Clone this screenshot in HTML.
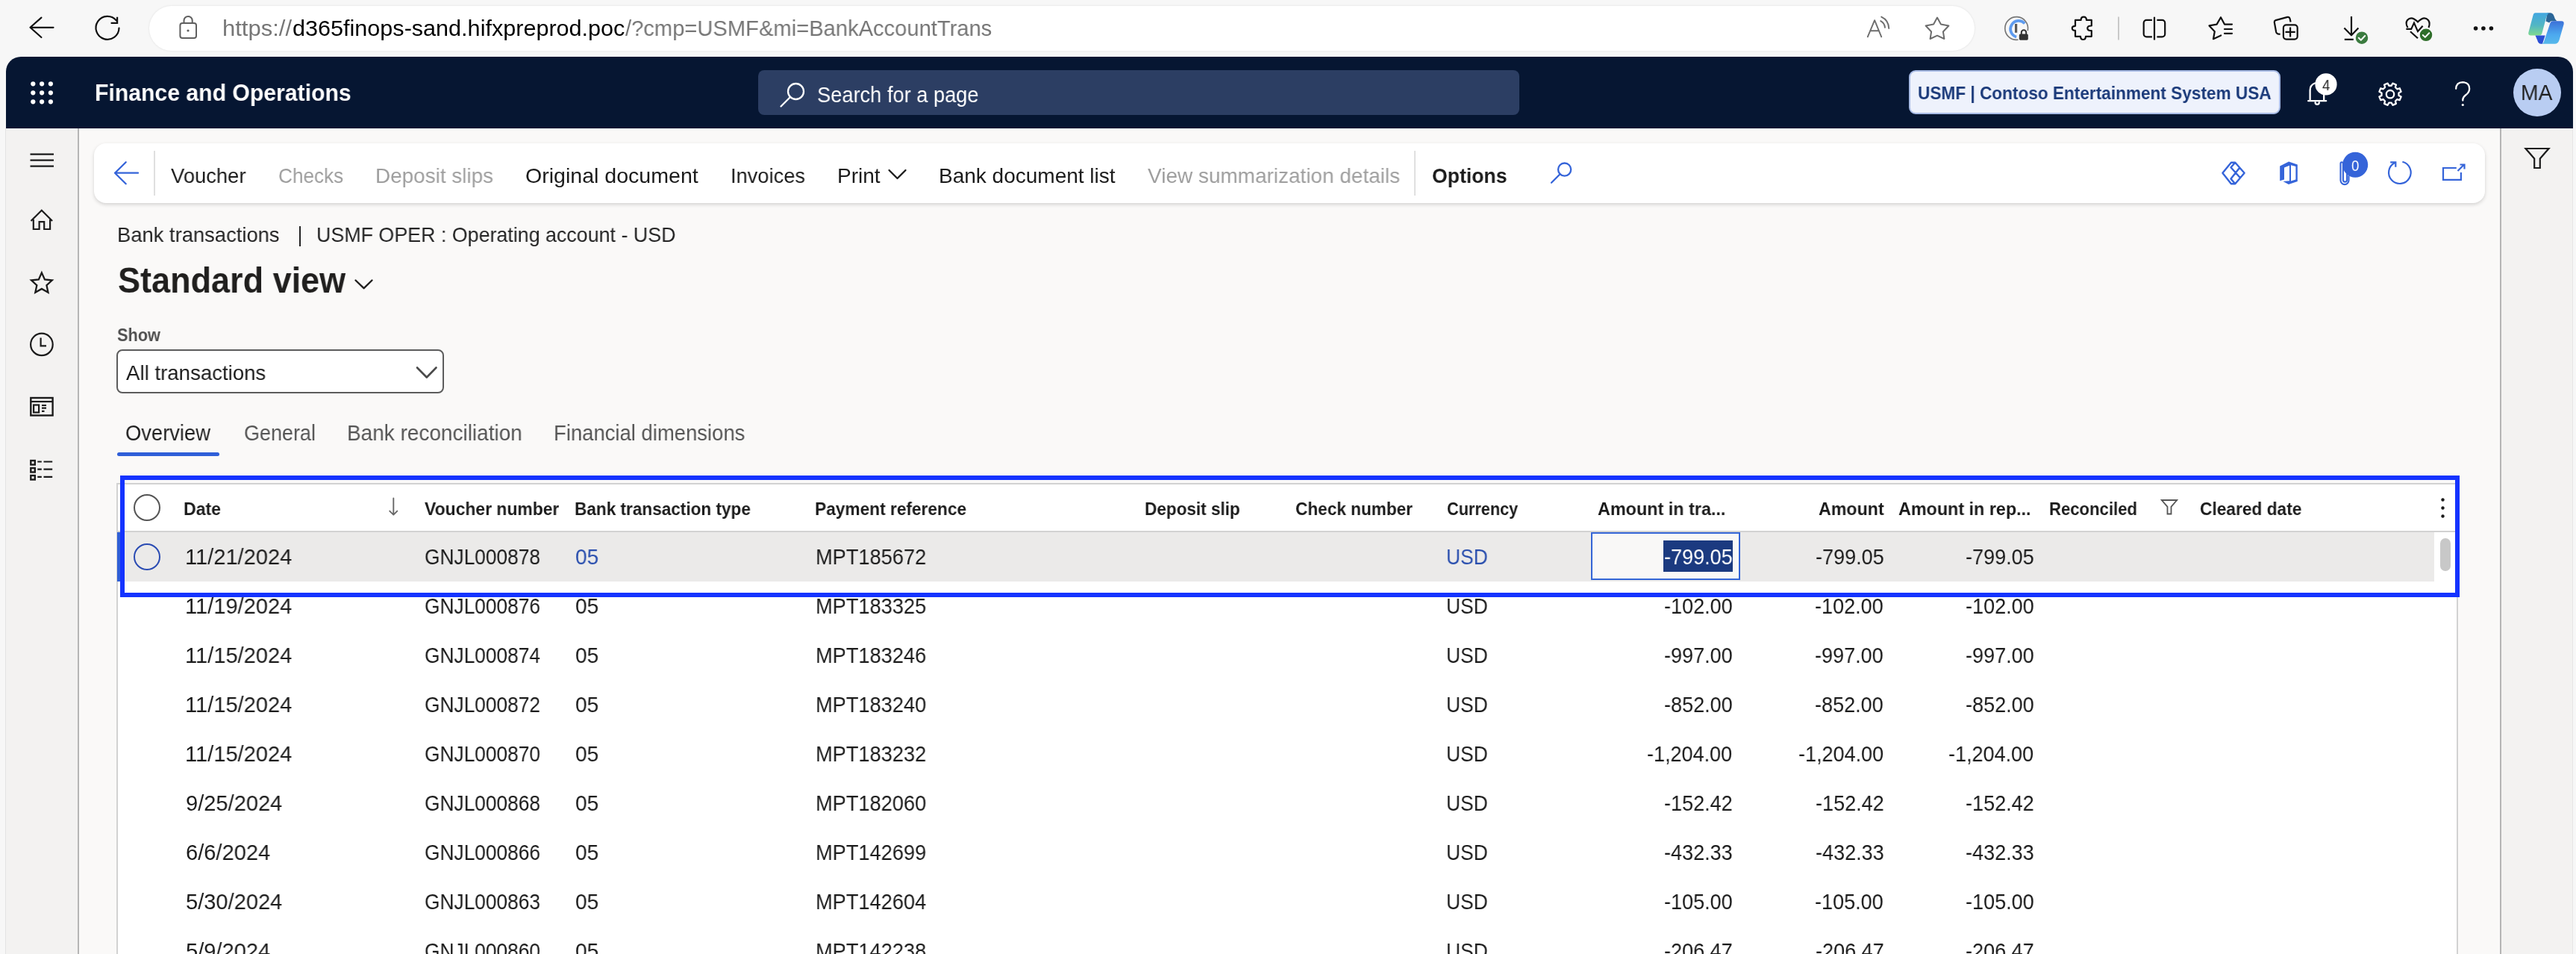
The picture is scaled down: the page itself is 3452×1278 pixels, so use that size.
<!DOCTYPE html>
<html><head><meta charset="utf-8"><title>Bank transactions</title>
<style>
html,body{margin:0;padding:0;}
body{width:3452px;height:1278px;overflow:hidden;position:relative;background:#f7f7f7;font-family:"Liberation Sans", sans-serif;}
.abs{position:absolute;}
.t{position:absolute;white-space:nowrap;transform-origin:0 0;will-change:transform;}
svg.i{position:absolute;overflow:visible;}
</style></head><body>
<div class="abs" style="left:0;top:0;width:3452px;height:76px;background:#f7f7f7"></div>
<div class="abs" style="left:200px;top:8px;width:2446px;height:60px;border-radius:30px;background:#fff;box-shadow:0 0 3px rgba(0,0,0,.10)"></div>
<div class="abs" style="left:8px;top:76px;width:3440px;height:96px;background:#061632;border-radius:20px 20px 0 0"></div>
<div class="abs" style="left:7px;top:172px;width:98px;height:1106px;background:#f3f2f1;border-left:1px solid #e3e3e3;box-sizing:border-box"></div>
<div class="abs" style="left:104px;top:172px;width:2px;height:1106px;background:#b5b5b5"></div>
<div class="abs" style="left:106px;top:172px;width:3244px;height:1106px;background:#faf9f8"></div>
<div class="abs" style="left:3350px;top:172px;width:2px;height:1106px;background:#b5b5b5"></div>
<div class="abs" style="left:3352px;top:172px;width:96px;height:1106px;background:#f3f2f1;border-right:1px solid #e6e6e6;box-sizing:border-box"></div>
<!-- navbar items -->
<div class="abs" style="left:1016px;top:94px;width:1020px;height:60px;background:#2c3e63;border-radius:8px"></div>
<div class="abs" style="left:2558px;top:94px;width:498px;height:59px;background:#eef2fc;border:2px solid #a9bce6;border-radius:9px;box-sizing:border-box"></div>
<div class="abs" style="left:3368px;top:92px;width:64px;height:64px;background:#b9cdf2;border-radius:50%"></div>
<!-- command bar -->
<div class="abs" style="left:126px;top:192px;width:3204px;height:80px;background:#fff;border-radius:16px;box-shadow:0 2px 5px rgba(0,0,0,.16)"></div>
<div class="abs" style="left:206px;top:202px;width:2px;height:60px;background:#e0e0e0"></div>
<div class="abs" style="left:1895px;top:202px;width:2px;height:60px;background:#e0e0e0"></div>
<!-- breadcrumb separator -->
<div class="abs" style="left:401px;top:303px;width:2px;height:27px;background:#242424"></div>
<!-- dropdown -->
<div class="abs" style="left:156px;top:468px;width:439px;height:59px;background:#fff;border:2px solid #5c5c5c;border-radius:8px;box-sizing:border-box"></div>
<!-- tab underline -->
<div class="abs" style="left:157px;top:606px;width:137px;height:5px;background:#2f5fd8;border-radius:3px"></div>
<!-- grid -->
<div class="abs" style="left:156px;top:647px;width:3138px;height:700px;background:#fff;border:2px solid #d2d2d2;box-sizing:border-box"></div>
<div class="abs" style="left:158px;top:711px;width:3134px;height:2px;background:#d2d2d2"></div>
<div class="abs" style="left:158px;top:713px;width:3104px;height:66px;background:#ebeae9"></div>
<div class="abs" style="left:157px;top:713px;width:4px;height:66px;background:#2f5fd8"></div>
<div class="abs" style="left:2132px;top:713px;width:200px;height:64px;background:#f9f8f7;border:2px solid #3465d6;box-sizing:border-box"></div>
<div class="abs" style="left:2229px;top:724px;width:93px;height:42px;background:#1b3a80"></div>
<div class="abs" style="left:3270px;top:721px;width:14px;height:44px;background:#c8c8c8;border-radius:7px"></div>
<div class="abs" style="left:179px;top:662px;width:36px;height:36px;border:2px solid #555;border-radius:50%;box-sizing:border-box"></div>
<div class="abs" style="left:179px;top:728px;width:36px;height:36px;border:2px solid #2a4bb3;border-radius:50%;box-sizing:border-box"></div>
<!-- annotation rect -->
<div class="abs" style="left:161px;top:637px;width:3135px;height:163px;border:6px solid #1433ff;box-sizing:border-box"></div>

<svg class="i" style="left:0;top:0" width="3452" height="1278" viewBox="0 0 3452 1278">
<g fill="none" stroke-linecap="round" stroke-linejoin="round">
  <!-- browser back -->
  <path d="M71.5 36.8H40.5M55.4 23.6L40.5 36.8L55.4 50" stroke="#111" stroke-width="2.2"/>
  <!-- refresh -->
  <path d="M159.5 37.5A15.5 15.5 0 1 1 156 27.5" stroke="#111" stroke-width="2.2"/>
  <path d="M157.1 22.8V30.9H148.6" stroke="#111" stroke-width="2.2" stroke-linecap="butt" stroke-linejoin="miter"/>
  <!-- lock -->
  <path d="M246.5 30.5V27.5A5.6 5.6 0 0 1 257.7 27.5V30.5" stroke="#5f5f5f" stroke-width="2"/>
  <rect x="241.4" y="31" width="21.6" height="20" rx="3" stroke="#5f5f5f" stroke-width="2"/>
  <circle cx="252" cy="41" r="1.6" fill="#5f5f5f" stroke="none"/>
  <!-- read aloud -->
  <path d="M2502.8 49.3L2512.1 27.2L2521.2 49.3M2506.9 41.2H2517.3" stroke="#6d6d6d" stroke-width="1.9"/>
  <path d="M2520.2 28.1Q2525.5 31 2526 36.8" stroke="#6d6d6d" stroke-width="1.9"/>
  <path d="M2521.2 22.6Q2530.8 27 2531.2 38" stroke="#6d6d6d" stroke-width="1.9"/>
  <!-- fav star -->
  <path d="M2596 23.6L2600.9 32.4L2611.4 34.5L2603.9 42.5L2605.4 52L2596 47.7L2586.6 52L2588.1 42.5L2580.6 34.5L2591.1 32.4Z" stroke="#6d6d6d" stroke-width="2"/>
  <!-- 1password -->
  <path d="M2704 53.3A15.4 15.4 0 1 1 2717.4 40.5" stroke="#777" stroke-width="1.6"/>
  <path d="M2713.3 31.5A11 11 0 1 0 2702.2 49.5" stroke="#5e9bef" stroke-width="3.8" stroke-linecap="butt"/>
  <rect x="2700" y="32" width="3.2" height="11.8" fill="#5a5a5a" stroke="none"/>
  <path d="M2708.8 46V43.5A3.2 3.2 0 0 1 2715.2 43.5V46" stroke="#333" stroke-width="2"/>
  <rect x="2705.8" y="45.5" width="12" height="8.2" rx="1.6" fill="#333" stroke="none"/>
  <!-- puzzle -->
  <path d="M2781 26.9H2788.6Q2788.6 22.7 2792.3 22.7Q2796 22.7 2796 26.9H2802.8V34.5Q2797.3 34.5 2797.3 37.8Q2797.3 41.2 2802.8 41.2V48.8H2795Q2795 53 2791.5 53Q2788 53 2788 48.8H2781V40.9Q2776.8 40.9 2776.8 37.8Q2776.8 34.8 2781 34.8Z" stroke="#111" stroke-width="2.2"/>
  <line x1="2839" y1="22.5" x2="2839" y2="53.5" stroke="#c9c9c9" stroke-width="2" stroke-linecap="butt"/>
  <!-- split -->
  <path d="M2883.9 26.9H2876.5A3.8 3.8 0 0 0 2872.7 30.7V45.5A3.8 3.8 0 0 0 2876.5 49.3H2883.9" stroke="#111" stroke-width="2.2" stroke-linecap="butt"/>
  <path d="M2890.4 26.9H2897.4A3.8 3.8 0 0 1 2901.2 30.7V45.5A3.8 3.8 0 0 1 2897.4 49.3H2890.4" stroke="#111" stroke-width="2.2" stroke-linecap="butt"/>
  <line x1="2887" y1="22.7" x2="2887" y2="53.5" stroke="#111" stroke-width="2.2" stroke-linecap="butt"/>
  <!-- favorites -->
  <path d="M2976.2 47.4L2966 52.2L2967.8 42.2L2960.5 34.4L2970.6 32.6L2976 23.2L2981 32.6H2991" stroke="#111" stroke-width="2.2"/>
  <path d="M2981 39H2991M2981 44.8H2991" stroke="#111" stroke-width="2.2"/>
  <!-- collections -->
  <path d="M3055.6 45.8L3052.4 45.4Q3050.6 44.8 3050.2 43L3047.8 29.8Q3047.6 27.7 3049.6 27.1L3065.3 22.9Q3067.8 22.4 3068.6 25L3069.6 29.6" stroke="#111" stroke-width="2.2" stroke-linecap="butt"/>
  <rect x="3059.9" y="33.4" width="18.8" height="19.2" rx="3.8" stroke="#111" stroke-width="2.2"/>
  <path d="M3062.5 42.8H3075.7M3069.1 36.6V49.6" stroke="#111" stroke-width="2.2" stroke-linecap="butt"/>
  <!-- downloads -->
  <path d="M3151 22V47.3M3141.4 37.6L3151 47.3L3160.4 37.6M3141.8 52.9H3153.8" stroke="#111" stroke-width="2.2" stroke-linecap="butt"/>
  <circle cx="3165" cy="50.7" r="9" fill="#3b7b3f" stroke="#f7f7f7" stroke-width="1.5"/>
  <path d="M3160.8 50.8L3163.8 53.7L3169.2 48" stroke="#fff" stroke-width="2"/>
  <!-- health -->
  <path d="M3226.5 37Q3223 31 3226 27Q3230 22.5 3235 25.5Q3239 28 3240 29.5Q3241 28 3245 25.5Q3250 22.5 3254 27Q3257 31 3254.5 37" stroke="#111" stroke-width="2.2" stroke-linecap="butt"/>
  <path d="M3224.4 38.9H3231.2L3235 30.6L3240 42.1L3246.6 34.7" stroke="#111" stroke-width="2.2" stroke-linecap="butt" stroke-linejoin="miter"/>
  <path d="M3230 42.2L3240 51.3" stroke="#111" stroke-width="2.2" stroke-linecap="butt"/>
  <circle cx="3251" cy="46.8" r="9" fill="#2f6e2a" stroke="#f7f7f7" stroke-width="1.5"/>
  <path d="M3246.8 47L3249.8 49.9L3255.2 44.2" stroke="#fff" stroke-width="2"/>
  <!-- more -->
  <circle cx="3317.6" cy="38" r="2.8" fill="#111" stroke="none"/>
  <circle cx="3327.9" cy="38" r="2.8" fill="#111" stroke="none"/>
  <circle cx="3338.4" cy="38" r="2.8" fill="#111" stroke="none"/>
</g>
<!-- copilot -->
<defs>
  <linearGradient id="cpL" x1="0" y1="0" x2="0" y2="1"><stop offset="0" stop-color="#3fa9e0"/><stop offset="0.5" stop-color="#4cb3c8"/><stop offset="1" stop-color="#7fd98e"/></linearGradient>
  <linearGradient id="cpR" x1="0" y1="0" x2="0" y2="1"><stop offset="0" stop-color="#3e78dc"/><stop offset="0.6" stop-color="#4aa8ee"/><stop offset="1" stop-color="#58b8ec"/></linearGradient>
</defs>
<defs>
  <linearGradient id="cpL2" x1="0" y1="0" x2="0" y2="1"><stop offset="0" stop-color="#42a6e0"/><stop offset="0.55" stop-color="#52b6c4"/><stop offset="1" stop-color="#80da8e"/></linearGradient>
  <linearGradient id="cpR2" x1="0" y1="0" x2="0" y2="1"><stop offset="0" stop-color="#3c70d8"/><stop offset="0.6" stop-color="#4ca9ef"/><stop offset="1" stop-color="#57b9ea"/></linearGradient>
</defs>
<path d="M3413.5 17.3H3417.5Q3420.8 17.3 3422.2 20.8L3424 25.5Q3425.2 28.2 3428.2 28.2H3419.5Q3417.2 28.2 3416.3 30.5L3411.6 28.6Z" fill="#2a6597"/>
<path d="M3397.5 17.3H3416Q3413.3 18.8 3412.2 23L3406.3 45Q3405.6 47.6 3402.6 47.6H3391.6Q3387.7 47.6 3388.3 43.8L3394.5 20.6Q3395.4 17.3 3397.5 17.3Z" fill="url(#cpL2)"/>
<path d="M3397.5 47.6H3410.7L3407 58.8H3405Q3401.5 58.8 3400.3 54Z" fill="#2b4fd4"/>
<path d="M3421.5 28.2H3432.5Q3436.5 28.2 3435.6 32.6L3429.6 53.5Q3428 58.8 3423.5 58.8H3405.8Q3408.2 58.8 3409.3 55L3417.2 31.5Q3418.3 28.2 3421.5 28.2Z" fill="url(#cpR2)"/>
<!-- navbar -->
<g fill="#fff">
  <circle cx="44.3" cy="112.3" r="3.1"/><circle cx="56.1" cy="112.3" r="3.1"/><circle cx="67.9" cy="112.3" r="3.1"/>
  <circle cx="44.3" cy="124.3" r="3.1"/><circle cx="56.1" cy="124.3" r="3.1"/><circle cx="67.9" cy="124.3" r="3.1"/>
  <circle cx="44.3" cy="136.3" r="3.1"/><circle cx="56.1" cy="136.3" r="3.1"/><circle cx="67.9" cy="136.3" r="3.1"/>
</g>
<g fill="none" stroke="#fff" stroke-width="2.3" stroke-linecap="round" stroke-linejoin="round">
  <circle cx="1066.5" cy="122.5" r="10.5"/>
  <path d="M1059 130L1046.5 142.5"/>
  <!-- bell -->
  <path d="M3095.6 134.5V121Q3095.6 114 3102 111.5M3114.2 124V134.5M3093.2 135.2H3117.2"/>
  <path d="M3102.6 137.2A2.6 2.6 0 0 0 3107.8 137.2"/>
  <!-- gear -->
  <circle cx="3203" cy="126.2" r="5.2"/>
  <path d="M3204.71 114.73L3206.37 111.58L3210.95 113.48L3209.90 116.88L3212.32 119.30L3215.72 118.25L3217.62 122.83L3214.47 124.49L3214.47 127.91L3217.62 129.57L3215.72 134.15L3212.32 133.10L3209.90 135.52L3210.95 138.92L3206.37 140.82L3204.71 137.67L3201.29 137.67L3199.63 140.82L3195.05 138.92L3196.10 135.52L3193.68 133.10L3190.28 134.15L3188.38 129.57L3191.53 127.91L3191.53 124.49L3188.38 122.83L3190.28 118.25L3193.68 119.30L3196.10 116.88L3195.05 113.48L3199.63 111.58L3201.29 114.73Z"/>
  <!-- help -->
  <path d="M3291.2 118.8Q3291.5 110.5 3300.2 110.2Q3309.2 110.4 3309.2 119Q3309 124 3304 127.5Q3300.3 130.5 3300.3 133.5V134.5"/>
</g>
<circle cx="3300.3" cy="140.5" r="1.6" fill="#fff"/>
<circle cx="3117" cy="112.9" r="14.6" fill="#fff"/>
<!-- command bar icons -->
<g fill="none" stroke="#3564d9" stroke-width="2.3" stroke-linecap="round" stroke-linejoin="round">
  <path d="M185 231.7H154M168.7 217.3L154 231.7L168.7 246.3"/>
  <circle cx="2096.6" cy="227.1" r="8.6"/>
  <path d="M2090.5 233.2L2079 244.8"/>
  <!-- power apps -->
  <path d="M2995.3 217.8L3007.6 231.8L2995.3 246.2H2989.9L2978.4 231.8L2989.9 217.8Z M2995.3 217.8L2989.5 224.3L3001.6 237.8 M3001 225L2989.5 239.6L2995.3 246.2" stroke-width="2.4" stroke-linejoin="round"/>
  <!-- refresh -->
  <path d="M3219.4 216.8A14.8 14.8 0 1 1 3209.3 217.9" stroke-width="2.2" stroke-linecap="butt"/>
  <path d="M3203.2 217.3H3210.3V223.8" stroke-width="2.2" stroke-linecap="butt" stroke-linejoin="miter"/>
  <!-- open new -->
  <path d="M3291.8 225H3274V240.9H3297.9V231" stroke-width="2.2" stroke-linecap="butt" stroke-linejoin="miter"/>
  <path d="M3293.5 229L3302 220.5M3296.5 220.5H3302.5V226.5" stroke-width="2.2" stroke-linecap="butt" stroke-linejoin="miter"/>
  <!-- paperclip -->
  <path d="M3147.5 236V241.6A5.5 5.5 0 0 1 3136.5 241.6V219A1.7 1.7 0 0 1 3139.9 219V241A2.6 2.6 0 0 0 3145.1 241V231.5" stroke-width="2.1"/>
</g>
<!-- office -->
<path fill="#3564d9" d="M3055.2 222.5L3067.1 216.6L3078.8 220.4V243.1L3066.9 246.9L3059.5 242.9L3068 242.3V221.7L3061 224.5V240.5L3055.2 242.3Z M3070 221.2V242.6L3076.4 240.6V222.9Z" fill-rule="evenodd"/>
<circle cx="3156.2" cy="220.8" r="17" fill="#3564d9"/>
<!-- print chevron & standard view chevron & dropdown chevron -->
<g fill="none" stroke-linecap="round" stroke-linejoin="round">
  <path d="M1191.5 228L1202.5 239L1213.5 228" stroke="#1b1b1b" stroke-width="2.3"/>
  <path d="M476.5 375.5L487.6 386.2L498.5 375.5" stroke="#201f1e" stroke-width="2.4"/>
  <path d="M559 492.5L571.8 505.5L584.5 492.5" stroke="#4a4a4a" stroke-width="2.6"/>
</g>
<!-- right panel filter -->
<path d="M3384.5 199H3415.5L3403.8 212.5V225H3396.2V212.5Z" fill="none" stroke="#1b1b1b" stroke-width="2.2" stroke-linejoin="miter"/>
<!-- sidebar -->
<g fill="none" stroke="#1b1b1b" stroke-width="2.2" stroke-linecap="butt" stroke-linejoin="miter">
  <path d="M40.5 206.7H72M40.5 214.7H72M40.5 222.7H72"/>
  <path d="M41.5 296L55.8 281.8L70.1 296M44.8 294V307H52.6V297.2H59.2V307H67.1V294"/>
  <path d="M55.90 365.40L59.96 374.42L69.79 375.49L62.46 382.13L64.48 391.81L55.90 386.90L47.32 391.81L49.34 382.13L42.01 375.49L51.84 374.42Z" stroke-width="2.3"/>
  <circle cx="55.9" cy="461.4" r="14.8"/>
  <path d="M54.6 452.4V463.3H62"/>
  <rect x="41.3" y="533" width="29.3" height="23.5" stroke-width="2.4"/>
  <path d="M41.3 538H70.6"/>
  <rect x="45.1" y="542.5" width="7" height="10" stroke-width="2.2"/>
  <path d="M56 543H62M56 546.7H62M56 550.8H59.5"/>
  <rect x="41.3" y="617" width="5.5" height="5.5" stroke-width="2.4"/>
  <rect x="41.3" y="627" width="5.5" height="5.5" stroke-width="2.4"/>
  <rect x="41.3" y="637" width="5.5" height="5.5" stroke-width="2.4"/>
  <path d="M50.3 618.5H55.8M58.5 618.5H70.2M50.3 628.7H55.8M58.5 628.7H70.2M50.3 638.8H55.8M58.5 638.8H70.2"/>
</g>
<!-- grid icons -->
<g fill="none" stroke-linecap="butt">
  <path d="M527.3 667.5V689.5M522.2 684.6L527.3 689.7L532.3 684.6" stroke="#686868" stroke-width="1.9" stroke-linejoin="round" stroke-linecap="round"/>
  <path d="M2896.8 670H2917.2L2909.5 678.8V688.5H2904.5V678.8Z" stroke="#555" stroke-width="1.8" stroke-linejoin="miter"/>
</g>
<g fill="#1b1b1b"><circle cx="3273.5" cy="669.5" r="2.2"/><circle cx="3273.5" cy="680.5" r="2.2"/><circle cx="3273.5" cy="691.5" r="2.2"/></g>
</svg>

<div class="t" style="left:297.90px;top:22.93px;font-size:29.5px;line-height:29.5px;font-weight:400;color:#767676;transform:scaleX(1.0510)">https://</div><div class="t" style="left:392.46px;top:22.93px;font-size:29.5px;line-height:29.5px;font-weight:400;color:#000000;transform:scaleX(1.0366)">d365finops-sand.hifxpreprod.poc</div><div class="t" style="left:837.90px;top:22.93px;font-size:29.5px;line-height:29.5px;font-weight:400;color:#767676;transform:scaleX(0.9878)">/?cmp=USMF&amp;mi=BankAccountTrans</div><div class="t" style="left:127.11px;top:107.80px;font-size:32px;line-height:32px;font-weight:700;color:#ffffff;transform:scaleX(0.9427)">Finance and Operations</div><div class="t" style="left:1095.09px;top:112.00px;font-size:30px;line-height:30px;font-weight:400;color:#ffffff;transform:scaleX(0.9079)">Search for a page</div><div class="t" style="left:2570.08px;top:113.17px;font-size:24.5px;line-height:24.5px;font-weight:700;color:#1b3a7a;transform:scaleX(0.9228)">USMF | Contoso Entertainment System USA</div><div class="t" style="left:3378.05px;top:110.35px;font-size:29px;line-height:29px;font-weight:400;color:#1f1f1f;transform:scaleX(0.9725)">MA</div><div class="t" style="left:3111.70px;top:103.60px;font-size:20px;line-height:20px;font-weight:400;color:#242424;transform:scaleX(0.9273)">4</div><div class="t" style="left:3151.00px;top:211.15px;font-size:21px;line-height:21px;font-weight:400;color:#ffffff;transform:scaleX(0.8818)">0</div><div class="t" style="left:228.60px;top:221.50px;font-size:28px;line-height:28px;font-weight:400;color:#1b1b1b;transform:scaleX(0.9773)">Voucher</div><div class="t" style="left:372.67px;top:221.50px;font-size:28px;line-height:28px;font-weight:400;color:#9e9e9e;transform:scaleX(0.9347)">Checks</div><div class="t" style="left:503.01px;top:221.50px;font-size:28px;line-height:28px;font-weight:400;color:#9e9e9e;transform:scaleX(0.9953)">Deposit slips</div><div class="t" style="left:703.58px;top:221.50px;font-size:28px;line-height:28px;font-weight:400;color:#1b1b1b;transform:scaleX(1.0197)">Original document</div><div class="t" style="left:979.05px;top:221.50px;font-size:28px;line-height:28px;font-weight:400;color:#1b1b1b;transform:scaleX(0.9728)">Invoices</div><div class="t" style="left:1122.01px;top:221.50px;font-size:28px;line-height:28px;font-weight:400;color:#1b1b1b;transform:scaleX(0.9930)">Print</div><div class="t" style="left:1257.70px;top:221.50px;font-size:28px;line-height:28px;font-weight:400;color:#1b1b1b;transform:scaleX(0.9979)">Bank document list</div><div class="t" style="left:1537.70px;top:221.50px;font-size:28px;line-height:28px;font-weight:400;color:#9e9e9e;transform:scaleX(0.9981)">View summarization details</div><div class="t" style="left:1918.85px;top:221.50px;font-size:28px;line-height:28px;font-weight:700;color:#1b1b1b;transform:scaleX(0.9502)">Options</div><div class="t" style="left:157.45px;top:300.50px;font-size:28px;line-height:28px;font-weight:400;color:#242424;transform:scaleX(0.9774)">Bank transactions</div><div class="t" style="left:424.08px;top:300.50px;font-size:28px;line-height:28px;font-weight:400;color:#242424;transform:scaleX(0.9578)">USMF OPER : Operating account - USD</div><div class="t" style="left:158.48px;top:350.55px;font-size:49px;line-height:49px;font-weight:700;color:#201f1e;transform:scaleX(0.9187)">Standard view</div><div class="t" style="left:156.50px;top:437.40px;font-size:24px;line-height:24px;font-weight:700;color:#505050;transform:scaleX(0.9047)">Show</div><div class="t" style="left:168.70px;top:486.10px;font-size:28px;line-height:28px;font-weight:400;color:#1b1b1b;transform:scaleX(0.9864)">All transactions</div><div class="t" style="left:167.66px;top:566.05px;font-size:29px;line-height:29px;font-weight:400;color:#1f1f1f;transform:scaleX(0.9428)">Overview</div><div class="t" style="left:326.67px;top:566.05px;font-size:29px;line-height:29px;font-weight:400;color:#555555;transform:scaleX(0.9302)">General</div><div class="t" style="left:464.77px;top:566.05px;font-size:29px;line-height:29px;font-weight:400;color:#555555;transform:scaleX(0.9643)">Bank reconciliation</div><div class="t" style="left:741.91px;top:566.05px;font-size:29px;line-height:29px;font-weight:400;color:#555555;transform:scaleX(0.9467)">Financial dimensions</div><div class="t" style="left:246.02px;top:670.73px;font-size:23.5px;line-height:23.5px;font-weight:700;color:#1b1b1b;transform:scaleX(0.9826)">Date</div><div class="t" style="left:568.60px;top:670.73px;font-size:23.5px;line-height:23.5px;font-weight:700;color:#1b1b1b;transform:scaleX(0.9749)">Voucher number</div><div class="t" style="left:770.04px;top:670.73px;font-size:23.5px;line-height:23.5px;font-weight:700;color:#1b1b1b;transform:scaleX(0.9606)">Bank transaction type</div><div class="t" style="left:1091.53px;top:670.73px;font-size:23.5px;line-height:23.5px;font-weight:700;color:#1b1b1b;transform:scaleX(0.9654)">Payment reference</div><div class="t" style="left:1534.04px;top:670.73px;font-size:23.5px;line-height:23.5px;font-weight:700;color:#1b1b1b;transform:scaleX(0.9588)">Deposit slip</div><div class="t" style="left:1736.00px;top:670.73px;font-size:23.5px;line-height:23.5px;font-weight:700;color:#1b1b1b;transform:scaleX(0.9614)">Check number</div><div class="t" style="left:1938.50px;top:670.73px;font-size:23.5px;line-height:23.5px;font-weight:700;color:#1b1b1b;transform:scaleX(0.9233)">Currency</div><div class="t" style="left:2140.50px;top:670.73px;font-size:23.5px;line-height:23.5px;font-weight:700;color:#1b1b1b;transform:scaleX(0.9948)">Amount in tra...</div><div class="t" style="left:2437.00px;top:670.73px;font-size:23.5px;line-height:23.5px;font-weight:700;color:#1b1b1b;transform:scaleX(0.9873)">Amount</div><div class="t" style="left:2544.00px;top:670.73px;font-size:23.5px;line-height:23.5px;font-weight:700;color:#1b1b1b;transform:scaleX(0.9925)">Amount in rep...</div><div class="t" style="left:2746.06px;top:670.73px;font-size:23.5px;line-height:23.5px;font-weight:700;color:#1b1b1b;transform:scaleX(0.9405)">Reconciled</div><div class="t" style="left:2948.40px;top:670.73px;font-size:23.5px;line-height:23.5px;font-weight:700;color:#1b1b1b;transform:scaleX(0.9668)">Cleared date</div><div class="t" style="left:247.51px;top:731.98px;font-size:29.2px;line-height:29.2px;font-weight:400;color:#1b1b1b;transform:scaleX(0.9952)">11/21/2024</div><div class="t" style="left:569.10px;top:731.98px;font-size:29.2px;line-height:29.2px;font-weight:400;color:#1b1b1b;transform:scaleX(0.9012)">GNJL000878</div><div class="t" style="left:771.04px;top:731.98px;font-size:29.2px;line-height:29.2px;font-weight:400;color:#2a4fae;transform:scaleX(0.9592)">05</div><div class="t" style="left:1092.74px;top:731.98px;font-size:29.2px;line-height:29.2px;font-weight:400;color:#1b1b1b;transform:scaleX(0.9321)">MPT185672</div><div class="t" style="left:1938.19px;top:731.98px;font-size:29.2px;line-height:29.2px;font-weight:400;color:#2a4fae;transform:scaleX(0.9053)">USD</div><div class="t" style="left:2230.47px;top:731.98px;font-size:29.2px;line-height:29.2px;font-weight:400;color:#ffffff;transform:scaleX(0.9260)">-799.05</div><div class="t" style="left:2432.97px;top:731.98px;font-size:29.2px;line-height:29.2px;font-weight:400;color:#1b1b1b;transform:scaleX(0.9260)">-799.05</div><div class="t" style="left:2634.47px;top:731.98px;font-size:29.2px;line-height:29.2px;font-weight:400;color:#1b1b1b;transform:scaleX(0.9260)">-799.05</div><div class="t" style="left:247.51px;top:797.98px;font-size:29.2px;line-height:29.2px;font-weight:400;color:#1b1b1b;transform:scaleX(0.9952)">11/19/2024</div><div class="t" style="left:569.10px;top:797.98px;font-size:29.2px;line-height:29.2px;font-weight:400;color:#1b1b1b;transform:scaleX(0.9012)">GNJL000876</div><div class="t" style="left:771.04px;top:797.98px;font-size:29.2px;line-height:29.2px;font-weight:400;color:#1b1b1b;transform:scaleX(0.9592)">05</div><div class="t" style="left:1092.74px;top:797.98px;font-size:29.2px;line-height:29.2px;font-weight:400;color:#1b1b1b;transform:scaleX(0.9321)">MPT183325</div><div class="t" style="left:1938.19px;top:797.98px;font-size:29.2px;line-height:29.2px;font-weight:400;color:#1b1b1b;transform:scaleX(0.9053)">USD</div><div class="t" style="left:2229.55px;top:797.98px;font-size:29.2px;line-height:29.2px;font-weight:400;color:#1b1b1b;transform:scaleX(0.9260)">-102.00</div><div class="t" style="left:2432.05px;top:797.98px;font-size:29.2px;line-height:29.2px;font-weight:400;color:#1b1b1b;transform:scaleX(0.9260)">-102.00</div><div class="t" style="left:2633.55px;top:797.98px;font-size:29.2px;line-height:29.2px;font-weight:400;color:#1b1b1b;transform:scaleX(0.9260)">-102.00</div><div class="t" style="left:247.51px;top:863.98px;font-size:29.2px;line-height:29.2px;font-weight:400;color:#1b1b1b;transform:scaleX(0.9952)">11/15/2024</div><div class="t" style="left:569.10px;top:863.98px;font-size:29.2px;line-height:29.2px;font-weight:400;color:#1b1b1b;transform:scaleX(0.9012)">GNJL000874</div><div class="t" style="left:771.04px;top:863.98px;font-size:29.2px;line-height:29.2px;font-weight:400;color:#1b1b1b;transform:scaleX(0.9592)">05</div><div class="t" style="left:1092.74px;top:863.98px;font-size:29.2px;line-height:29.2px;font-weight:400;color:#1b1b1b;transform:scaleX(0.9321)">MPT183246</div><div class="t" style="left:1938.19px;top:863.98px;font-size:29.2px;line-height:29.2px;font-weight:400;color:#1b1b1b;transform:scaleX(0.9053)">USD</div><div class="t" style="left:2229.55px;top:863.98px;font-size:29.2px;line-height:29.2px;font-weight:400;color:#1b1b1b;transform:scaleX(0.9260)">-997.00</div><div class="t" style="left:2432.05px;top:863.98px;font-size:29.2px;line-height:29.2px;font-weight:400;color:#1b1b1b;transform:scaleX(0.9260)">-997.00</div><div class="t" style="left:2633.55px;top:863.98px;font-size:29.2px;line-height:29.2px;font-weight:400;color:#1b1b1b;transform:scaleX(0.9260)">-997.00</div><div class="t" style="left:247.51px;top:929.98px;font-size:29.2px;line-height:29.2px;font-weight:400;color:#1b1b1b;transform:scaleX(0.9952)">11/15/2024</div><div class="t" style="left:569.10px;top:929.98px;font-size:29.2px;line-height:29.2px;font-weight:400;color:#1b1b1b;transform:scaleX(0.9012)">GNJL000872</div><div class="t" style="left:771.04px;top:929.98px;font-size:29.2px;line-height:29.2px;font-weight:400;color:#1b1b1b;transform:scaleX(0.9592)">05</div><div class="t" style="left:1092.74px;top:929.98px;font-size:29.2px;line-height:29.2px;font-weight:400;color:#1b1b1b;transform:scaleX(0.9321)">MPT183240</div><div class="t" style="left:1938.19px;top:929.98px;font-size:29.2px;line-height:29.2px;font-weight:400;color:#1b1b1b;transform:scaleX(0.9053)">USD</div><div class="t" style="left:2229.55px;top:929.98px;font-size:29.2px;line-height:29.2px;font-weight:400;color:#1b1b1b;transform:scaleX(0.9260)">-852.00</div><div class="t" style="left:2432.05px;top:929.98px;font-size:29.2px;line-height:29.2px;font-weight:400;color:#1b1b1b;transform:scaleX(0.9260)">-852.00</div><div class="t" style="left:2633.55px;top:929.98px;font-size:29.2px;line-height:29.2px;font-weight:400;color:#1b1b1b;transform:scaleX(0.9260)">-852.00</div><div class="t" style="left:247.51px;top:995.98px;font-size:29.2px;line-height:29.2px;font-weight:400;color:#1b1b1b;transform:scaleX(0.9952)">11/15/2024</div><div class="t" style="left:569.10px;top:995.98px;font-size:29.2px;line-height:29.2px;font-weight:400;color:#1b1b1b;transform:scaleX(0.9012)">GNJL000870</div><div class="t" style="left:771.04px;top:995.98px;font-size:29.2px;line-height:29.2px;font-weight:400;color:#1b1b1b;transform:scaleX(0.9592)">05</div><div class="t" style="left:1092.74px;top:995.98px;font-size:29.2px;line-height:29.2px;font-weight:400;color:#1b1b1b;transform:scaleX(0.9321)">MPT183232</div><div class="t" style="left:1938.19px;top:995.98px;font-size:29.2px;line-height:29.2px;font-weight:400;color:#1b1b1b;transform:scaleX(0.9053)">USD</div><div class="t" style="left:2207.01px;top:995.98px;font-size:29.2px;line-height:29.2px;font-weight:400;color:#1b1b1b;transform:scaleX(0.9260)">-1,204.00</div><div class="t" style="left:2409.51px;top:995.98px;font-size:29.2px;line-height:29.2px;font-weight:400;color:#1b1b1b;transform:scaleX(0.9260)">-1,204.00</div><div class="t" style="left:2611.01px;top:995.98px;font-size:29.2px;line-height:29.2px;font-weight:400;color:#1b1b1b;transform:scaleX(0.9260)">-1,204.00</div><div class="t" style="left:248.50px;top:1061.98px;font-size:29.2px;line-height:29.2px;font-weight:400;color:#1b1b1b;transform:scaleX(0.9952)">9/25/2024</div><div class="t" style="left:569.10px;top:1061.98px;font-size:29.2px;line-height:29.2px;font-weight:400;color:#1b1b1b;transform:scaleX(0.9012)">GNJL000868</div><div class="t" style="left:771.04px;top:1061.98px;font-size:29.2px;line-height:29.2px;font-weight:400;color:#1b1b1b;transform:scaleX(0.9592)">05</div><div class="t" style="left:1092.74px;top:1061.98px;font-size:29.2px;line-height:29.2px;font-weight:400;color:#1b1b1b;transform:scaleX(0.9321)">MPT182060</div><div class="t" style="left:1938.19px;top:1061.98px;font-size:29.2px;line-height:29.2px;font-weight:400;color:#1b1b1b;transform:scaleX(0.9053)">USD</div><div class="t" style="left:2230.47px;top:1061.98px;font-size:29.2px;line-height:29.2px;font-weight:400;color:#1b1b1b;transform:scaleX(0.9260)">-152.42</div><div class="t" style="left:2432.97px;top:1061.98px;font-size:29.2px;line-height:29.2px;font-weight:400;color:#1b1b1b;transform:scaleX(0.9260)">-152.42</div><div class="t" style="left:2634.47px;top:1061.98px;font-size:29.2px;line-height:29.2px;font-weight:400;color:#1b1b1b;transform:scaleX(0.9260)">-152.42</div><div class="t" style="left:248.50px;top:1127.98px;font-size:29.2px;line-height:29.2px;font-weight:400;color:#1b1b1b;transform:scaleX(0.9952)">6/6/2024</div><div class="t" style="left:569.10px;top:1127.98px;font-size:29.2px;line-height:29.2px;font-weight:400;color:#1b1b1b;transform:scaleX(0.9012)">GNJL000866</div><div class="t" style="left:771.04px;top:1127.98px;font-size:29.2px;line-height:29.2px;font-weight:400;color:#1b1b1b;transform:scaleX(0.9592)">05</div><div class="t" style="left:1092.74px;top:1127.98px;font-size:29.2px;line-height:29.2px;font-weight:400;color:#1b1b1b;transform:scaleX(0.9321)">MPT142699</div><div class="t" style="left:1938.19px;top:1127.98px;font-size:29.2px;line-height:29.2px;font-weight:400;color:#1b1b1b;transform:scaleX(0.9053)">USD</div><div class="t" style="left:2230.47px;top:1127.98px;font-size:29.2px;line-height:29.2px;font-weight:400;color:#1b1b1b;transform:scaleX(0.9260)">-432.33</div><div class="t" style="left:2432.97px;top:1127.98px;font-size:29.2px;line-height:29.2px;font-weight:400;color:#1b1b1b;transform:scaleX(0.9260)">-432.33</div><div class="t" style="left:2634.47px;top:1127.98px;font-size:29.2px;line-height:29.2px;font-weight:400;color:#1b1b1b;transform:scaleX(0.9260)">-432.33</div><div class="t" style="left:248.50px;top:1193.98px;font-size:29.2px;line-height:29.2px;font-weight:400;color:#1b1b1b;transform:scaleX(0.9952)">5/30/2024</div><div class="t" style="left:569.10px;top:1193.98px;font-size:29.2px;line-height:29.2px;font-weight:400;color:#1b1b1b;transform:scaleX(0.9012)">GNJL000863</div><div class="t" style="left:771.04px;top:1193.98px;font-size:29.2px;line-height:29.2px;font-weight:400;color:#1b1b1b;transform:scaleX(0.9592)">05</div><div class="t" style="left:1092.74px;top:1193.98px;font-size:29.2px;line-height:29.2px;font-weight:400;color:#1b1b1b;transform:scaleX(0.9321)">MPT142604</div><div class="t" style="left:1938.19px;top:1193.98px;font-size:29.2px;line-height:29.2px;font-weight:400;color:#1b1b1b;transform:scaleX(0.9053)">USD</div><div class="t" style="left:2229.55px;top:1193.98px;font-size:29.2px;line-height:29.2px;font-weight:400;color:#1b1b1b;transform:scaleX(0.9260)">-105.00</div><div class="t" style="left:2432.05px;top:1193.98px;font-size:29.2px;line-height:29.2px;font-weight:400;color:#1b1b1b;transform:scaleX(0.9260)">-105.00</div><div class="t" style="left:2633.55px;top:1193.98px;font-size:29.2px;line-height:29.2px;font-weight:400;color:#1b1b1b;transform:scaleX(0.9260)">-105.00</div><div class="t" style="left:248.50px;top:1259.98px;font-size:29.2px;line-height:29.2px;font-weight:400;color:#1b1b1b;transform:scaleX(0.9952)">5/9/2024</div><div class="t" style="left:569.10px;top:1259.98px;font-size:29.2px;line-height:29.2px;font-weight:400;color:#1b1b1b;transform:scaleX(0.9012)">GNJL000860</div><div class="t" style="left:771.04px;top:1259.98px;font-size:29.2px;line-height:29.2px;font-weight:400;color:#1b1b1b;transform:scaleX(0.9592)">05</div><div class="t" style="left:1092.74px;top:1259.98px;font-size:29.2px;line-height:29.2px;font-weight:400;color:#1b1b1b;transform:scaleX(0.9321)">MPT142238</div><div class="t" style="left:1938.19px;top:1259.98px;font-size:29.2px;line-height:29.2px;font-weight:400;color:#1b1b1b;transform:scaleX(0.9053)">USD</div><div class="t" style="left:2230.47px;top:1259.98px;font-size:29.2px;line-height:29.2px;font-weight:400;color:#1b1b1b;transform:scaleX(0.9260)">-206.47</div><div class="t" style="left:2432.97px;top:1259.98px;font-size:29.2px;line-height:29.2px;font-weight:400;color:#1b1b1b;transform:scaleX(0.9260)">-206.47</div><div class="t" style="left:2634.47px;top:1259.98px;font-size:29.2px;line-height:29.2px;font-weight:400;color:#1b1b1b;transform:scaleX(0.9260)">-206.47</div>
</body></html>
